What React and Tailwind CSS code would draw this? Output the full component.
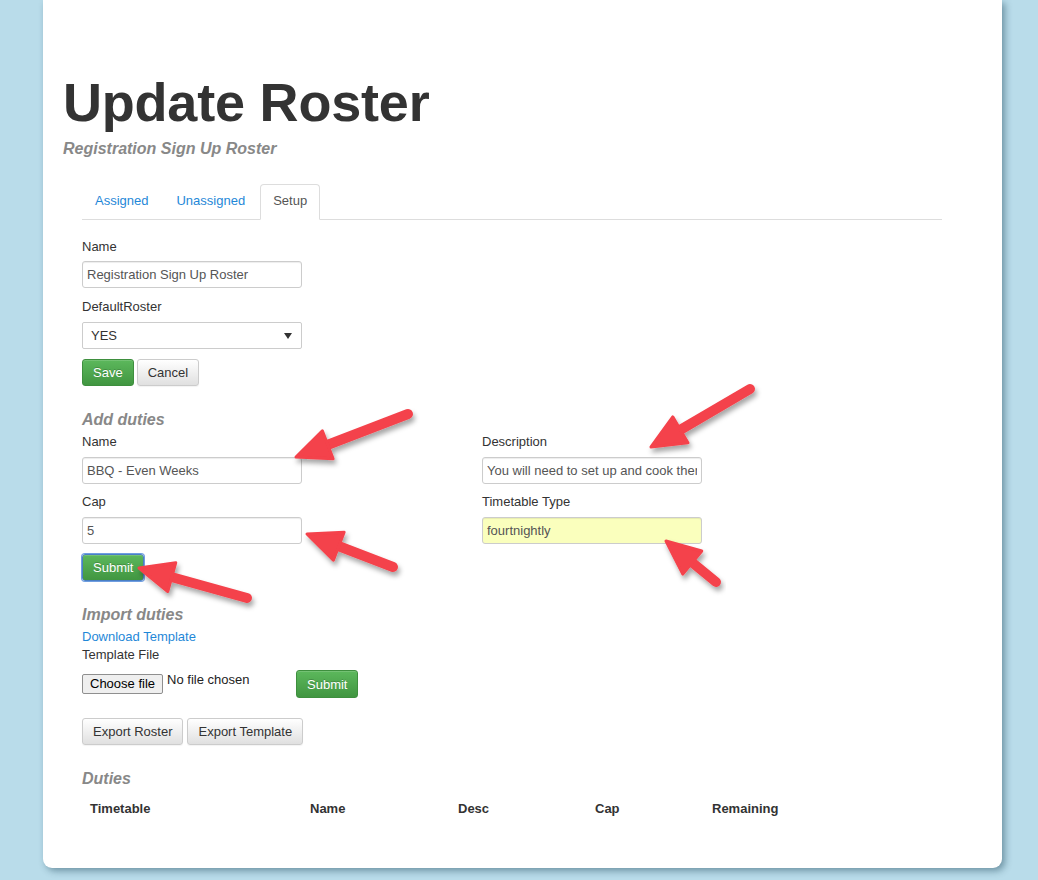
import React from "react";

const arrows = [
  [408, 414, 296, 457],
  [750, 389, 651, 447],
  [393, 567, 307, 534],
  [247, 598, 139, 568],
  [716, 582, 666, 541],
];

function Arrow({ x1, y1, x2, y2 }) {
  const dx = x2 - x1;
  const dy = y2 - y1;
  const len = Math.sqrt(dx * dx + dy * dy);
  const ux = dx / len;
  const uy = dy / len;
  const px = -uy;
  const py = ux;
  const H = 34;
  const W = 15;
  const bx = x2 - ux * H;
  const by = y2 - uy * H;
  const pts = `${x2},${y2} ${bx + px * W},${by + py * W} ${bx - px * W},${by - py * W}`;
  return (
    <g filter="url(#ashadow)">
      <line x1={x1} y1={y1} x2={bx + ux * 6} y2={by + uy * 6} stroke="#f4424b" strokeWidth="10" strokeLinecap="round" />
      <polygon points={pts} fill="#f4424b" stroke="#f4424b" strokeWidth="3" strokeLinejoin="round" />
    </g>
  );
}

function Label({ children, className = "" }) {
  return <div className={`text-[13px] leading-[18px] text-[#333] ${className}`}>{children}</div>;
}

function Field({ value, className = "" }) {
  return (
    <input
      readOnly
      value={value}
      className={`block w-[220px] h-[27px] px-[4px] text-[13px] text-[#555] border border-[#ccc] rounded-[3px] shadow-[inset_0_1px_1px_rgba(0,0,0,0.075)] outline-none ${className}`}
    />
  );
}

function GreenBtn({ children, className = "" }) {
  return (
    <button className={`px-[10px] py-[4px] text-[13px] leading-[17px] text-white border border-[#3e8f3e] rounded-[3px] bg-gradient-to-b from-[#5cb85c] to-[#419641] [text-shadow:0_-1px_0_rgba(0,0,0,0.2)] shadow-[inset_0_1px_0_rgba(255,255,255,0.15)] ${className}`}>
      {children}
    </button>
  );
}

function GrayBtn({ children, className = "" }) {
  return (
    <button className={`px-[10px] py-[4px] text-[13px] leading-[17px] text-[#333] border border-[#ccc] rounded-[3px] bg-gradient-to-b from-white to-[#e0e0e0] shadow-[0_1px_1px_rgba(0,0,0,0.05)] ${className}`}>
      {children}
    </button>
  );
}

export default function App() {
  return (
    <div className="relative w-[1038px] h-[880px] overflow-hidden bg-[#b9dcea] font-['Liberation_Sans',Arial,sans-serif]">
      {/* card */}
      <div className="ml-[43px] w-[959px] h-[868px] bg-white rounded-b-[9px] shadow-[3px_3px_7px_rgba(20,60,80,0.45)] pl-[20px]">
        <h1 className="pt-[75px] text-[54px] leading-[54px] font-bold text-[#333] tracking-[-0.2px]">Update Roster</h1>
        <div className="mt-[10px] text-[16px] leading-[20px] font-bold italic text-[#888]">Registration Sign Up Roster</div>

        <div className="ml-[19px] w-[860px]">
          {/* tabs */}
          <div className="mt-[25px] flex gap-[2px] border-b border-[#ddd] h-[36px]">
            <div className="h-[36px] px-[12px] pt-[7px] text-[13px] leading-[18px] text-[#1f88d8] border border-transparent">Assigned</div>
            <div className="h-[36px] px-[12px] pt-[7px] text-[13px] leading-[18px] text-[#1f88d8] border border-transparent">Unassigned</div>
            <div className="h-[36px] px-[12px] pt-[7px] text-[13px] leading-[18px] text-[#555] bg-white border border-[#ddd] border-b-white rounded-t-[4px]">Setup</div>
          </div>

          {/* roster form */}
          <Label className="mt-[18px]">Name</Label>
          <Field value="Registration Sign Up Roster" className="mt-[5px]" />
          <Label className="mt-[10px]">DefaultRoster</Label>
          <div className="mt-[6px] w-[220px] h-[27px] flex items-center justify-between pl-[8px] pr-[9px] text-[13px] text-[#333] border border-[#ccc] rounded-[2px] bg-white">
            <span>YES</span>
            <svg width="8" height="6" viewBox="0 0 8 6"><polygon points="0,0 8,0 4,6" fill="#333" /></svg>
          </div>
          <div className="mt-[10px] flex gap-[3px]">
            <GreenBtn>Save</GreenBtn>
            <GrayBtn>Cancel</GrayBtn>
          </div>

          {/* add duties */}
          <div className="mt-[24px] text-[16px] leading-[20px] font-bold italic text-[#888]">Add duties</div>
          <div className="mt-[3px] grid grid-cols-[400px_400px]">
            <div>
              <Label>Name</Label>
              <Field value="BBQ - Even Weeks" className="mt-[6px]" />
              <Label className="mt-[9px]">Cap</Label>
              <Field value="5" className="mt-[6px]" />
              <div className="mt-[10px]">
                <GreenBtn className="ring-1 ring-[#6f9ee0] border-[#4a7fc4]">Submit</GreenBtn>
              </div>
            </div>
            <div>
              <Label>Description</Label>
              <Field value="You will need to set up and cook them all" className="mt-[6px]" />
              <Label className="mt-[9px]">Timetable Type</Label>
              <Field value="fourtnightly" className="mt-[6px] bg-[#faffbd] text-[#222]" />
            </div>
          </div>

          {/* import duties */}
          <div className="mt-[24px] text-[16px] leading-[20px] font-bold italic text-[#888]">Import duties</div>
          <div className="mt-[3px] text-[13px] leading-[18px] text-[#1f88d8]">Download Template</div>
          <Label>Template File</Label>
          <div className="mt-[6px] flex items-start">
            <div className="w-[214px] flex items-start">
              <div className="mt-[4px] h-[20px] px-[7px] text-[13px] leading-[18px] text-black bg-[#efefef] border border-[#8f8f8f] rounded-[2px]">Choose file</div>
              <div className="ml-[4px] mt-[1px] text-[13px] leading-[18px] text-[#222]">No file chosen</div>
            </div>
            <GreenBtn className="h-[28px]">Submit</GreenBtn>
          </div>

          <div className="mt-[20px] flex gap-[4px]">
            <GrayBtn>Export Roster</GrayBtn>
            <GrayBtn>Export Template</GrayBtn>
          </div>

          {/* duties table */}
          <div className="mt-[24px] text-[16px] leading-[20px] font-bold italic text-[#888]">Duties</div>
          <div className="mt-[11px] grid grid-cols-[220px_148px_137px_117px_1fr] text-[13px] leading-[18px] font-bold text-[#333]">
            <div className="px-[8px]">Timetable</div>
            <div className="px-[8px]">Name</div>
            <div className="px-[8px]">Desc</div>
            <div className="px-[8px]">Cap</div>
            <div className="px-[8px]">Remaining</div>
          </div>
        </div>
      </div>

      {/* annotation arrows */}
      <svg className="absolute inset-0 pointer-events-none" width="1038" height="880" viewBox="0 0 1038 880">
        <defs>
          <filter id="ashadow" x="-20%" y="-20%" width="140%" height="160%">
            <feDropShadow dx="2" dy="4" stdDeviation="2.5" floodColor="#000" floodOpacity="0.35" />
          </filter>
        </defs>
        {arrows.map(([x1, y1, x2, y2], i) => (
          <Arrow key={i} x1={x1} y1={y1} x2={x2} y2={y2} />
        ))}
      </svg>
    </div>
  );
}
